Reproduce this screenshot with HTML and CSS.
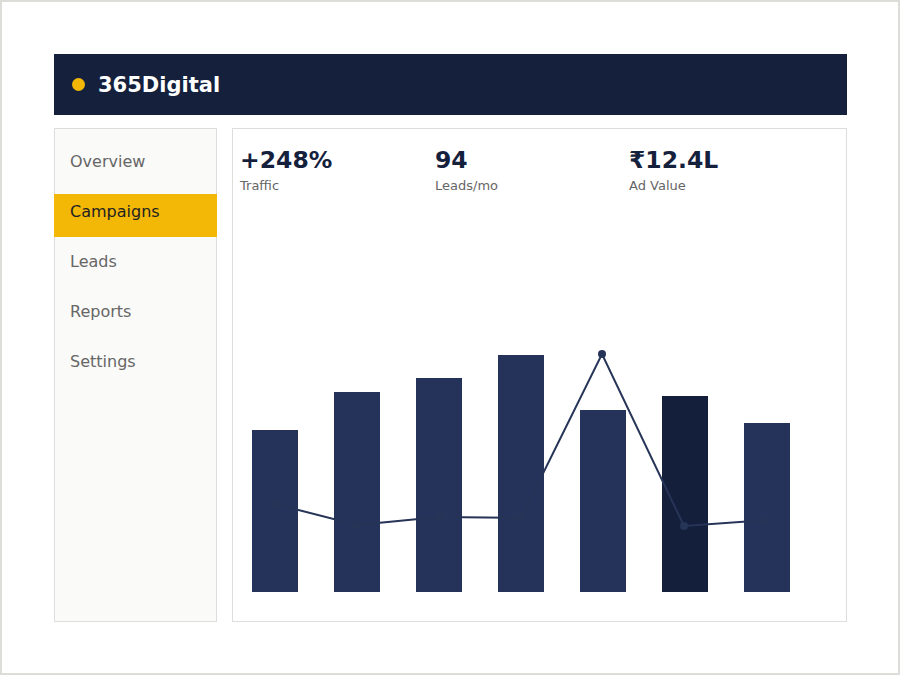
FILE: index.html
```html
<html>

<head>
  <meta name="viewport" content="width=device-width, initial-scale=1.0">
  <title>365Digital</title>
  <link rel="stylesheet" href="styles.css">
</head>

<body>
  <div id="frame">
    <div id="header">
      <span class="logo_dot"></span>
      <h1>365Digital</h1>
    </div>
    <div class="columns">
      <ul id="sidebar">
        <li>Overview</li>
        <li class="active">Campaigns</li>
        <li>Leads</li>
        <li>Reports</li>
        <li>Settings</li>
      </ul>
      <div id="panel">
        <div class="stats">
          <div>
            <div class="stat_value">+248%</div>
            <div class="stat_label">Traffic</div>
          </div>
          <div>
            <div class="stat_value">94</div>
            <div class="stat_label">Leads/mo</div>
          </div>
          <div>
            <div class="stat_value">&#8377;12.4L</div>
            <div class="stat_label">Ad Value</div>
          </div>
        </div>
        <div class="chart">
          <div class="bar" style="height: 162px"></div>
          <div class="bar" style="height: 200px"></div>
          <div class="bar" style="height: 214px"></div>
          <div class="bar" style="height: 237px"></div>
          <div class="bar" style="height: 182px"></div>
          <div class="bar current" style="height: 196px"></div>
          <div class="bar" style="height: 169px"></div>
          <!-- leads trend drawn over the bars -->
          <svg class="trend" width="538" height="252" viewBox="0 0 538 252">
            <polyline points="23,164 105,185 187,177 269,178 350,14 432,186 515,180" fill="none" stroke="#263457" stroke-width="2" />
            <circle cx="23" cy="164" r="4" fill="#263457" />
            <circle cx="105" cy="185" r="4" fill="#263457" />
            <circle cx="187" cy="177" r="4" fill="#263457" />
            <circle cx="269" cy="178" r="4" fill="#263457" />
            <circle cx="350" cy="14" r="4" fill="#263457" />
            <circle cx="432" cy="186" r="4" fill="#263457" />
            <circle cx="515" cy="180" r="4" fill="#263457" />
          </svg>
        </div>
      </div>
    </div>
  </div>
</body>

</html>
```

FILE: styles.css
```css
* {
  box-sizing: border-box;
}

body {
  margin: 0;
  padding: 0;
  background-color: white;
  font-family: "DejaVu Sans", sans-serif;
}

#frame {
  width: 900px;
  height: 675px;
  border: 2px solid #dcdcd8;
  padding: 52px 51px 0 52px;
}

#header {
  display: flex;
  align-items: center;
  height: 61px;
  padding-left: 18px;
  background-color: #15213c;
}

.logo_dot {
  width: 13px;
  height: 13px;
  border-radius: 50%;
  background-color: #f3b705;
  margin-right: 13px;
}

#header h1 {
  margin: 0;
  color: white;
  font-size: 21px;
  font-weight: bold;
}

.columns {
  display: flex;
  margin-top: 13px;
  gap: 15px;
}

#sidebar {
  list-style-type: none;
  margin: 0;
  padding: 15px 0 0 0;
  width: 163px;
  height: 494px;
  background-color: #fafaf8;
  border: 1px solid #dddddb;
}

#sidebar li {
  height: 43px;
  margin: 0 -1px 7px -1px;
  padding: 8px 16px 0 16px;
  font-size: 16px;
  line-height: 19px;
  color: #666666;
}

#sidebar li.active {
  background-color: #f3b705;
  color: #222222;
}

#panel {
  display: flex;
  flex-direction: column;
  width: 615px;
  height: 494px;
  border: 1px solid #dddddb;
  background-color: white;
  padding: 18px 0 29px 7px;
}

.stats {
  display: grid;
  grid-template-columns: 195px 194px 1fr;
}

.stat_value {
  font-size: 23.5px;
  font-weight: bold;
  line-height: 26px;
  color: #15213c;
}

.stat_label {
  font-size: 13px;
  line-height: 16px;
  color: #666666;
  margin-top: 5px;
}

.chart {
  position: relative;
  display: flex;
  align-items: flex-end;
  gap: 36px;
  width: 538px;
  height: 252px;
  margin-top: auto;
  margin-left: 12px;
}

.bar {
  width: 46px;
  background-color: #25335a;
}

.bar.current {
  background-color: #131f3b;
}

.trend {
  position: absolute;
  top: 0;
  left: 0;
}
```
